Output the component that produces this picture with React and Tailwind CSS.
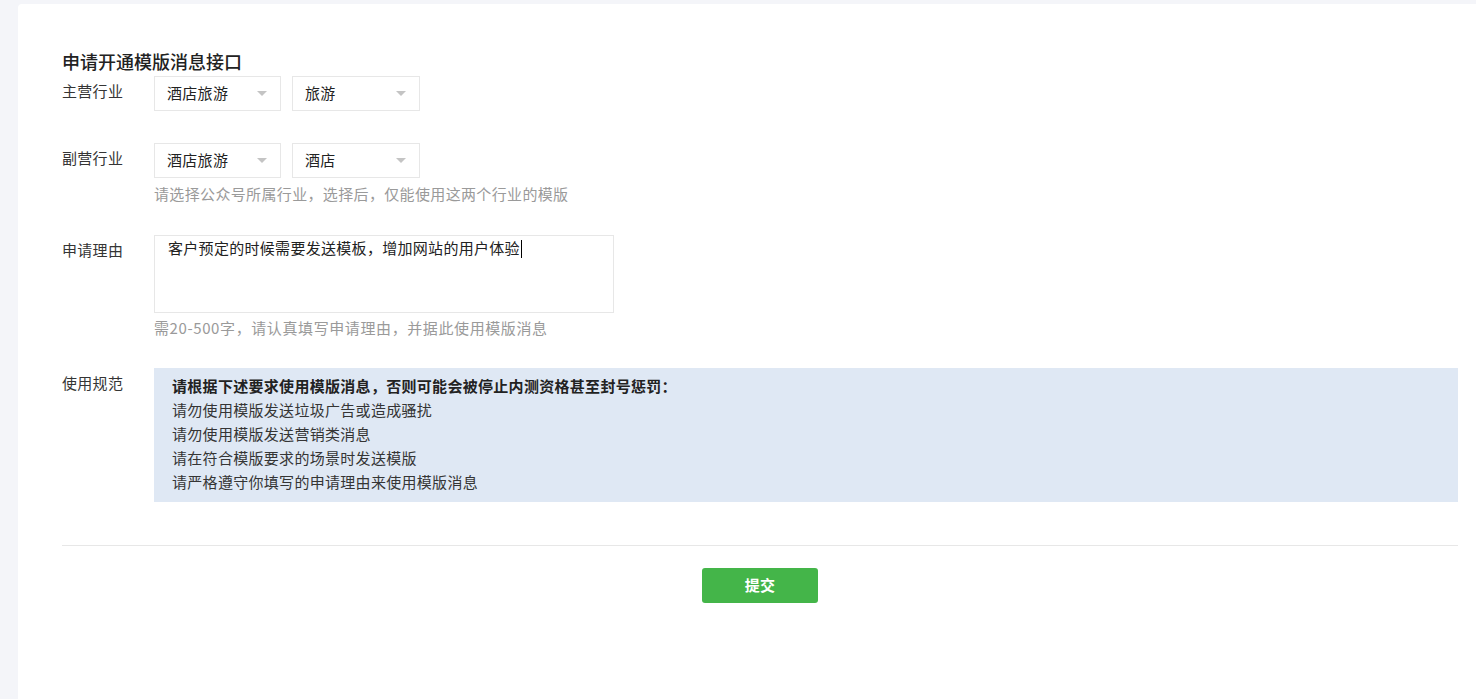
import React from 'react';

const Select = ({ value, width = 'w-[127px]' }) => (
  <div className={`flex h-[35px] ${width} items-center justify-between border border-[#e7e7e7] bg-white pl-3 pr-[13px] text-[15px] text-[#222]`}>
    <span>{value}</span>
    <span className="h-0 w-0 border-l-[5px] border-r-[5px] border-t-[5px] border-l-transparent border-r-transparent border-t-[#c4c4c4]" />
  </div>
);

const Field = ({ label, children }) => (
  <div className="flex">
    <label className="w-[92px] shrink-0 text-[15px] leading-[30px] text-[#353535]">{label}</label>
    <div className="flex-1">{children}</div>
  </div>
);

const rules = [
  '请勿使用模版发送垃圾广告或造成骚扰',
  '请勿使用模版发送营销类消息',
  '请在符合模版要求的场景时发送模版',
  '请严格遵守你填写的申请理由来使用模版消息',
];

export default function App() {
  return (
    <div
      className="min-h-screen bg-[#f4f5f9] pl-[18px] pt-[4px] tracking-[0.3px]"
      style={{ fontFamily: '"Noto Sans CJK SC", "Noto Sans", sans-serif' }}
    >
      <div className="min-h-[695px] rounded-tl-[4px] bg-white pl-[44px] pr-[18px] pt-[45px]">
        <h2 className="mb-[3px] text-[18px] font-medium leading-6 tracking-normal text-[#222]">申请开通模版消息接口</h2>

        {/* 主营行业 */}
        <div className="mb-8">
          <Field label="主营行业">
            <div className="flex gap-[11px]">
              <Select value="酒店旅游" />
              <Select value="旅游" width="w-[128px]" />
            </div>
          </Field>
        </div>

        {/* 副营行业 */}
        <div className="mb-[31px]">
          <Field label="副营行业">
            <div className="flex gap-[11px]">
              <Select value="酒店旅游" />
              <Select value="酒店" width="w-[128px]" />
            </div>
            <p className="mt-[6px] text-[15px] leading-5 tracking-[0.35px] text-[#9a9a9a]">
              请选择公众号所属行业，选择后，仅能使用这两个行业的模版
            </p>
          </Field>
        </div>

        {/* 申请理由 */}
        <div className="mb-[30px]">
          <Field label="申请理由">
            <div className="h-[78px] w-[460px] border border-[#e7e7e7] px-[13px] pt-0 text-[15px] leading-6 text-[#222]">
              客户预定的时候需要发送模板，增加网站的用户体验
              <span className="ml-px inline-block h-[18px] w-px translate-y-[4px] bg-black" />
            </div>
            <p className="mt-[5px] text-[15px] leading-5 tracking-[0.6px] text-[#9a9a9a]">
              需20-500字，请认真填写申请理由，并据此使用模版消息
            </p>
          </Field>
        </div>

        {/* 使用规范 */}
        <Field label="使用规范">
          <div className="bg-[#dfe8f4] px-[18px] pb-[8px] pt-[6px] text-[15px] leading-6 text-[#353535]">
            <p className="font-semibold text-[#222]">请根据下述要求使用模版消息，否则可能会被停止内测资格甚至封号惩罚：</p>
            {rules.map((r) => (
              <p key={r}>{r}</p>
            ))}
          </div>
        </Field>

        <div className="mt-[43px] border-t border-[#e7e7e7] pt-[22px]">
          <div className="flex justify-center">
            <button className="h-[35px] w-[116px] rounded-[3px] bg-[#44b549] text-[15px] font-semibold text-white">
              提交
            </button>
          </div>
        </div>
      </div>
    </div>
  );
}
